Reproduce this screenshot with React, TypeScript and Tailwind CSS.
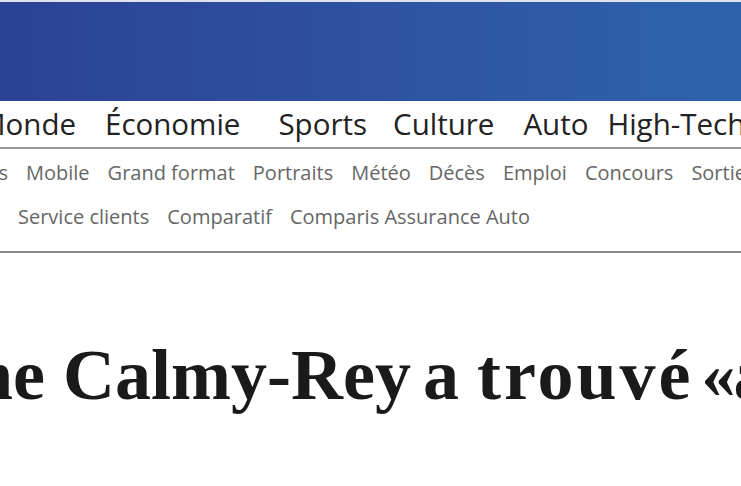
import React from "react";

const mainNav = [
  { label: "Économie", ml: "ml-[29px]" },
  { label: "Sports", ml: "ml-[38px]" },
  { label: "Culture", ml: "ml-[26px]" },
  { label: "Auto", ml: "ml-[29px]" },
  { label: "High-Tech", ml: "ml-[19px]" },
];

const subNav = ["Mobile", "Grand format", "Portraits", "Météo", "Décès", "Emploi", "Concours", "Sorties"];
const subNav2 = ["Service clients", "Comparatif", "Comparis Assurance Auto"];

// word cut by the left edge of the window: only its tail shows
function Clipped({ width, children }: { width: string; children: React.ReactNode }) {
  return (
    <span className={`flex shrink-0 justify-end overflow-hidden ${width}`}>
      <span className="shrink-0">{children}</span>
    </span>
  );
}

export default function App() {
  return (
    <div className="h-[486px] w-[741px] overflow-hidden bg-white">
      <div className="h-[2px] bg-[#dfe3ee]" />
      <div className="h-[99px] bg-gradient-to-r from-[#2c4294] to-[#2e63ac]" />

      <nav
        className="flex h-[46px] items-center whitespace-nowrap text-[29.5px] text-[#222]"
        style={{ fontFamily: '"Open Sans", sans-serif' }}
      >
        <Clipped width="w-[76px]">Monde</Clipped>
        {mainNav.map((item) => (
          <span key={item.label} className={`shrink-0 ${item.ml}`}>
            {item.label}
          </span>
        ))}
      </nav>
      <div className="h-[2px] bg-[#999]" />

      <div
        className="whitespace-nowrap pb-[12px] pt-[2px] text-[20px] text-[#666]"
        style={{ fontFamily: '"Open Sans", sans-serif' }}
      >
        <div className="flex h-[44px] items-center gap-[18px]">
          <Clipped width="w-[8px]">Podcasts</Clipped>
          {subNav.map((l) => (
            <span key={l} className="shrink-0">
              {l}
            </span>
          ))}
        </div>
        <div className="flex h-[44px] items-center gap-[18px] pl-[18px]">
          {subNav2.map((l) => (
            <span key={l} className="shrink-0">
              {l}
            </span>
          ))}
        </div>
      </div>
      <div className="h-[2px] bg-[#888]" />

      <h1
        className="mt-[86px] flex items-baseline whitespace-nowrap text-[72px] font-bold leading-none text-[#1a1a1a] [word-spacing:-6px]"
        style={{ fontFamily: '"Liberation Serif", serif' }}
      >
        <Clipped width="w-[45px]">Micheline</Clipped>
        <span className="ml-[18px] shrink-0">Calmy-Rey a</span>
        <span className="ml-[18px] shrink-0 tracking-[3px]">trouvé</span>
        <span className="relative -top-[2px] ml-[8px] shrink-0 text-[68px]">«</span>
        <span className="ml-[-2px] shrink-0">au</span>
      </h1>
    </div>
  );
}
